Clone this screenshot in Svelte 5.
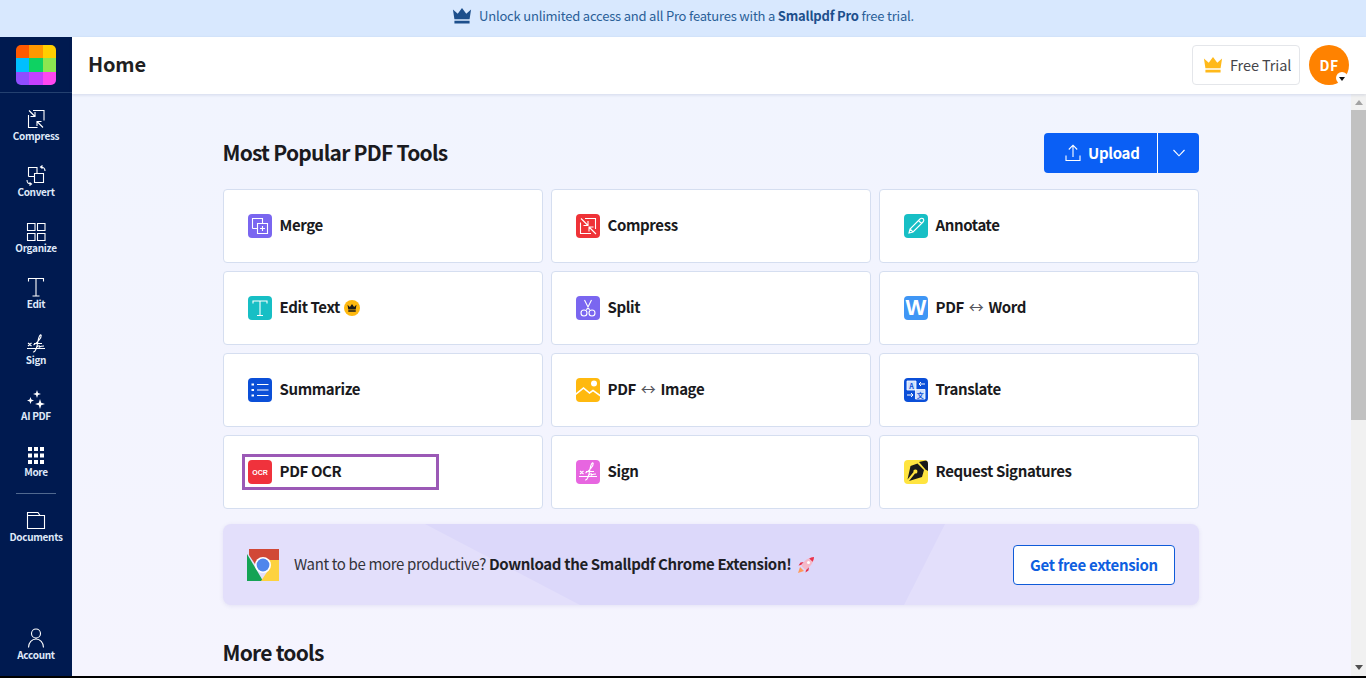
<script>
  const crown = "M1 1.5L5.5 5.5L9.5 0L13.5 5.5L18 1.5L16.6 10.5H2.4Z M2.4 12H16.6V14.6H2.4Z";
  const signPath = "M3 16.5H21 M4 11L7.5 14 M7.5 11L4 14 M9 20C11.5 20.5 13 15 14 9C14.8 4.5 16.5 1.5 17.2 3.5C17.5 6 13.5 10.5 9.5 13 M10 11.5H18 M13 15C15 13 16 13.5 15.5 15C17 14 18 14 20 14";

  const nav = [
    { label: "Compress", d: "M9 2.5H20V12.5 M4.5 7V19.5H13.5 M5 2.5L11 8.5 M11 4V8.5H6.5 M19 19.5L13 13.5 M13 18V13.5H17.5" },
    { label: "Convert", d: "M4.5 12.5V3.5H13V9 M4.5 12.5H10.5 M10.5 9.5H19.5V18.5H10.5Z M18.5 1.5L16.5 3L18.5 4.5 M16.5 3C19.5 3 21 4 21 7 M5.5 21.5L7.5 20L5.5 18.5 M7.5 20C4.5 20 3 19 3 16" },
    { label: "Organize", d: "M3.5 3.5H11V10.5H3.5Z M13.5 3.5H21V10.5H13.5Z M3.5 13.5H11V20.5H3.5Z M13.5 13.5H21V20.5H13.5Z" },
    { label: "Edit", d: "M4.5 5.5V2.5H19.5V5.5 M12 2.5V20 M8.5 20H15.5" },
    { label: "Sign", d: signPath },
    { label: "AI PDF", f: "M13 2L14 5L17 6L14 7L13 10L12 7L9 6L12 5Z M6.5 9L7.4 11.6L10 12.5L7.4 13.4L6.5 16L5.6 13.4L3 12.5L5.6 11.6Z M16 11L17.2 14.8L21 16L17.2 17.2L16 21L14.8 17.2L11 16L14.8 14.8Z" },
    { label: "More", f: "M4 3H8V7H4Z M10 3H14V7H10Z M16 3H20V7H16Z M4 9.5H8V13.5H4Z M10 9.5H14V13.5H10Z M16 9.5H20V13.5H16Z M4 16H8V20H4Z M10 16H14V20H10Z M16 16H20V20H16Z" }
  ];

  const tools = [
    { name: "Merge", bg: "#7a66f0", d: "M4.5 14.5V4.5H14.5V9 M4.5 14.5H9.5 M9.5 9.5H19.5V19.5H9.5Z M14.5 12V17 M12 14.5H17" },
    { name: "Compress", bg: "#ef3237", d: "M9 4.5H19.5V15 M4.5 8.5V19.5H15 M5 4.5L12 11.5 M12 7V11.5H7.5 M20 20L13 13 M13 17.5V13H17.5" },
    { name: "Annotate", bg: "#17bfc5", d: "M5 19L6 15L16 5C17 4 18.5 4 19.5 5C20 6 20 7 19 8L9 18Z M14.5 6.5L17.5 9.5 M6 15L9 18" },
    { name: "Edit Text", bg: "#17bfc5", pro: true, d: "M5 7.5V5H19V7.5 M12 5V19.5 M9 19.5H15" },
    { name: "Split", bg: "#7a66f0", d: "M8.5 4L13.5 14 M15.5 4L10.5 14 M11 17A3 3 0 1 1 5 17A3 3 0 1 1 11 17Z M19 17A3 3 0 1 1 13 17A3 3 0 1 1 19 17Z" },
    { name: "PDF", to: "Word", bg: "#3f96f5", letter: "W" },
    { name: "Summarize", bg: "#0b4fd8", d: "M9 6.5H20.5 M9 12H20.5 M9 17.5H20.5", f: "M3.5 5.5H6V7.5H3.5Z M3.5 11H6V13H3.5Z M3.5 16.5H6V18.5H3.5Z" },
    { name: "PDF", to: "Image", bg: "#ffb90f", f: "M0 15L7.5 9L13.5 14L17 11.5L24 16.5V18.5L17 13.5L13.5 16L7.5 11L0 17Z M21 5.5A3 3 0 1 1 15 5.5A3 3 0 1 1 21 5.5Z" },
    { name: "Translate", bg: "#0b4fd8", translate: true },
    { name: "PDF OCR", bg: "#f0323c", ocr: true },
    { name: "Sign", bg: "#e766e0", d: signPath },
    { name: "Request Signatures", bg: "#ffe43f", nib: true }
  ];
</script>

{#snippet glyph(item, size)}
  <svg class="glyph" width={size} height={size} viewBox="0 0 24 24" aria-hidden="true">
    {#if item.d}<path d={item.d} fill="none" stroke="#fff" stroke-width="1.1" />{/if}
    {#if item.f}<path d={item.f} fill="#fff" />{/if}
  </svg>
{/snippet}

{#snippet toolIcon(tool)}
  <span class="tool-icon" style="background: {tool.bg}">
    {#if tool.letter}
      <span class="letter">{tool.letter}</span>
    {:else if tool.ocr}
      <span class="ocr-mark">OCR</span>
    {:else if tool.nib}
      <svg width="24" height="24" viewBox="0 0 24 24" aria-hidden="true">
        <path d="M15 2L24 0V11L21.5 9.5L15 2Z" fill="#1a1a1a" />
        <path d="M13.5 3.5L20 10L18 17L5 21L11 13.5A2 2 0 1 0 9.5 12L3.5 19.5L6.5 6Z" fill="#1a1a1a" />
      </svg>
    {:else if tool.translate}
      <svg width="24" height="24" viewBox="0 0 24 24" aria-hidden="true">
        <path d="M3 3H12V12H3Z M11.5 11.5H21V21H11.5Z" fill="#cfe0fb" stroke="#fff" stroke-width=".8" />
        <text class="tr" x="7.5" y="10.5">A</text>
        <text class="tr" x="16.2" y="19.5">文</text>
        <path d="M21 6H15M17 4L15 6L17 8M3 17H9M7 15L9 17L7 19" fill="none" stroke="#fff" stroke-width="1" />
      </svg>
    {:else}
      {@render glyph(tool, 24)}
    {/if}
  </span>
{/snippet}

<div class="app">
  <div class="banner">
    <svg width="20" height="16" viewBox="1 0 17 15" aria-hidden="true"><path d={crown} fill="#1d4f8c" /></svg>
    <span>Unlock unlimited access and all Pro features with a <b>Smallpdf Pro</b> free trial.</span>
  </div>

  <div class="frame">
    <aside class="sidebar">
      <div class="logo-wrap">
        <div class="logo">
          <i style="background:#ff5a00"></i><i style="background:#ff9800"></i><i style="background:#ffcf00"></i>
          <i style="background:#00bfff"></i><i style="background:#0ed262"></i><i style="background:#8ce650"></i>
          <i style="background:#8f4dff"></i><i style="background:#c540ff"></i><i style="background:#ff47f0"></i>
        </div>
      </div>
      <nav class="nav">
        {#each nav as item}
          <div class="nav-item">{@render glyph(item, 24)}<span>{item.label}</span></div>
        {/each}
        <div class="nav-rule"></div>
        <div class="nav-item">
          {@render glyph({ d: "M3.5 19.5V3.5H14L16 6.5H20.5V19.5Z M3.5 6.5H16" }, 24)}<span>Documents</span>
        </div>
        <div class="nav-item account">
          {@render glyph({ d: "M16.5 6.5A4.5 4.5 0 1 1 7.5 6.5A4.5 4.5 0 1 1 16.5 6.5Z M4.5 20.5C4.5 15.5 8 12 12 12C16 12 19.5 15.5 19.5 20.5" }, 24)}<span>Account</span>
        </div>
      </nav>
    </aside>

    <div class="page">
      <header class="topbar">
        <h1>Home</h1>
        <button class="trial" type="button">
          <svg width="20" height="16" viewBox="1 0 17 15" aria-hidden="true"><path d={crown} fill="#ffb91a" /></svg>
          <span class="raised">Free Trial</span>
        </button>
        <div class="avatar">DF<span class="caret"></span></div>
      </header>

      <div class="body">
        <main class="content">
          <div class="heading-row">
            <h2>Most Popular PDF Tools</h2>
            <div class="upload">
              <button class="up-main" type="button">
                <svg width="16" height="18" viewBox="0 0 16 18" aria-hidden="true">
                  <path d="M8 13V1.5M3.8 5.5L8 1.2L12.2 5.5M1 11.5V16.5H15V11.5" fill="none" stroke="#fff" stroke-width="1.1" />
                </svg>
                <span class="raised">Upload</span>
              </button>
              <button class="up-more" type="button" aria-label="More upload options">
                <svg width="14" height="8" viewBox="0 0 14 8" aria-hidden="true"><path d="M1.5 1L7 6.8L12.5 1" fill="none" stroke="#fff" stroke-width="1.1" /></svg>
              </button>
            </div>
          </div>

          <div class="grid">
            {#each tools as tool}
              <div class="card">
                <div class="card-row" class:focused={tool.ocr}>
                  {@render toolIcon(tool)}
                  <span class="name">
                    {tool.name}{#if tool.to}<span class="arrow">↔</span>{tool.to}{/if}
                  </span>
                  {#if tool.pro}
                    <span class="pro">
                      <svg width="10" height="8" viewBox="0 0 19 15" aria-hidden="true"><path d={crown} fill="#1a1a1a" /></svg>
                    </span>
                  {/if}
                </div>
              </div>
            {/each}
          </div>

          <div class="promo">
            <svg class="chrome" width="32" height="32" viewBox="0 0 32 32" aria-hidden="true">
              <path d="M2 0H32V11H16L8 15L2 6Z" fill="#d14836" />
              <path d="M0 5L9 20L16 32H0Z" fill="#15a355" />
              <path d="M16 11H32V32H14L22 20Z" fill="#fdd23f" />
              <circle cx="16" cy="16" r="8" fill="#fff" />
              <circle cx="16" cy="16" r="6.4" fill="#4f86ec" />
            </svg>
            <p>Want to be more productive? <b>Download the Smallpdf Chrome Extension!</b></p>
            <svg class="rocket" width="18" height="18" viewBox="0 0 18 18" aria-hidden="true">
              <path d="M1 17L3 11L7 15Z" fill="#ff9a5a" />
              <path d="M4 9L1.5 9.5L3.5 6.5L7 6Z M9 14L8.5 16.5L11.5 14.5L12 11Z" fill="#e8344e" />
              <path d="M4.5 10C6.5 5 11 1.5 17 1C16.5 7 13 11.5 8 13.5Z" fill="#f5b8c8" />
              <path d="M17 1C16.8 3 16.3 4.5 15.6 5.8L12.2 2.4C13.5 1.7 15 1.2 17 1Z" fill="#e8344e" />
              <circle cx="11.5" cy="6.5" r="1.5" fill="#fff" />
            </svg>
            <button class="extension" type="button">Get free extension</button>
          </div>

          <h2 class="more-tools">More tools</h2>
        </main>

        <div class="scrollbar">
          <span class="arrow-up"></span>
          <span class="thumb"></span>
          <span class="arrow-down"></span>
        </div>
      </div>
    </div>
  </div>
</div>

<style>
  :global(body) {
    background: #000;
    overflow: hidden;
  }
  .app {
    height: 676px;
    display: flex;
    flex-direction: column;
    overflow: hidden;
    font-family: "Noto Sans CJK SC", "Noto Sans", sans-serif;
    color: #1a1a20;
  }
  button {
    font-family: inherit;
    cursor: pointer;
  }
  .raised { margin-bottom: 2px; }

  .banner {
    flex: 0 0 37px;
    box-sizing: border-box;
    padding-bottom: 5px;
    display: flex;
    align-items: center;
    justify-content: center;
    gap: 7px;
    background: #d8e8fe;
    color: #2a5f98;
    font-size: 13px;
    letter-spacing: -.2px;
    line-height: 20px;
  }
  .banner b { color: #1d4f8c; font-weight: 700; }

  .frame {
    flex: 1;
    min-height: 0;
    display: flex;
  }

  .sidebar {
    flex: 0 0 72px;
    display: flex;
    flex-direction: column;
    background: #001a50;
  }
  .logo-wrap {
    height: 56px;
    box-sizing: border-box;
    padding: 8px 16px;
    border-bottom: 1px solid #24406f;
  }
  .logo {
    width: 40px;
    height: 40px;
    display: grid;
    grid-template-columns: repeat(3, 1fr);
    grid-template-rows: repeat(3, 1fr);
    border-radius: 5px;
    overflow: hidden;
  }
  .nav {
    flex: 1;
    display: flex;
    flex-direction: column;
    padding: 7px 0 1px;
  }
  .nav-item {
    height: 56px;
    box-sizing: border-box;
    padding-top: 8px;
    display: flex;
    flex-direction: column;
    align-items: center;
    color: #dfe8f8;
    font-size: 10px;
    font-weight: 700;
    letter-spacing: -.3px;
    line-height: 14px;
  }
  .nav-item span { margin-top: -3px; }
  .nav-rule {
    height: 1px;
    margin: 1px 16px 7px;
    background: #51698f;
  }
  .account { margin-top: auto; }

  .page {
    flex: 1;
    min-width: 0;
    display: flex;
    flex-direction: column;
  }
  .topbar {
    flex: 0 0 57px;
    box-sizing: border-box;
    display: flex;
    align-items: center;
    padding: 0 17px 1px 16px;
    background: #fff;
    box-shadow: 0 1px 3px rgba(30, 50, 110, .14);
    position: relative;
  }
  h1 {
    margin: 0 auto 2px 0;
    font-size: 20px;
    letter-spacing: -.15px;
    line-height: 30px;
    font-weight: 700;
    color: #1f1f22;
  }
  .trial {
    width: 108px;
    height: 40px;
    display: flex;
    align-items: center;
    gap: 7px;
    padding: 0 0 0 10px;
    background: #fff;
    border: 1px solid #e4e6ea;
    border-radius: 4px;
    color: #45454a;
    font-size: 14.5px;
    letter-spacing: -.1px;
  }
  .avatar {
    width: 40px;
    height: 40px;
    margin-left: 9px;
    border-radius: 50%;
    background: #ff8200;
    color: #fff;
    display: flex;
    align-items: center;
    justify-content: center;
    font-size: 14px;
    font-weight: 700;
    letter-spacing: .5px;
    position: relative;
  }
  .caret {
    position: absolute;
    right: 1px;
    bottom: 1px;
    width: 12px;
    height: 12px;
    border-radius: 50%;
    background: #fff;
  }
  .caret::after {
    content: "";
    position: absolute;
    left: 2.5px;
    top: 5px;
    border: 3.5px solid transparent;
    border-top: 4px solid #111;
    border-bottom: 0;
  }

  .body {
    flex: 1;
    min-height: 0;
    display: flex;
    background: linear-gradient(180deg, #f1f4fe, #f5f4fe);
  }
  .content {
    flex: 1;
    min-width: 0;
    box-sizing: border-box;
    padding: 39px 152px 0 151px;
    overflow: hidden;
  }
  .heading-row {
    display: flex;
    align-items: center;
    justify-content: space-between;
    height: 40px;
    margin-bottom: 16px;
  }
  h2 {
    margin: 0 0 3px -.5px;
    font-size: 21px;
    letter-spacing: -.76px;
    line-height: 32px;
    font-weight: 700;
    color: #1a1a20;
  }
  .upload { display: flex; height: 40px; }
  .upload button {
    border: 0;
    background: #0a5ff5;
    color: #fff;
    display: flex;
    align-items: center;
  }
  .up-main {
    width: 114px;
    gap: 7px;
    padding: 0 0 0 21px;
    font-size: 15px;
    letter-spacing: -.3px;
    font-weight: 700;
    border-radius: 4px 0 0 4px;
    border-right: 1px solid #fff !important;
  }
  .up-more {
    width: 41px;
    padding: 0;
    justify-content: center;
    border-radius: 0 4px 4px 0;
  }

  .grid {
    display: grid;
    grid-template-columns: repeat(3, 320px);
    grid-auto-rows: 74px;
    gap: 8px;
  }
  .card {
    box-sizing: border-box;
    display: flex;
    align-items: center;
    padding-left: 24px;
    background: #fff;
    border: 1px solid #d5def0;
    border-radius: 4px;
  }
  .card-row {
    display: flex;
    align-items: center;
    gap: 7.5px;
  }
  .card-row.focused {
    width: 191px;
    box-sizing: border-box;
    margin-left: -3px;
    padding: 2px 3px;
    outline: 3px solid #9b59b6;
  }
  .tool-icon {
    width: 24px;
    height: 24px;
    flex: none;
    border-radius: 4px;
    overflow: hidden;
    display: flex;
    align-items: center;
    justify-content: center;
  }
  .glyph { display: block; flex: none; }
  .letter {
    color: #fff;
    font-family: "Liberation Sans", sans-serif;
    font-size: 22px;
    font-weight: 700;
    line-height: 24px;
  }
  .ocr-mark {
    color: #fff;
    font-family: "Liberation Sans", sans-serif;
    font-size: 7px;
    font-weight: 700;
  }
  .tr {
    font-family: "Noto Sans CJK SC", sans-serif;
    font-size: 7px;
    font-weight: 700;
    text-anchor: middle;
    fill: #0b4fd8;
  }
  .name {
    font-size: 15px;
    letter-spacing: -.38px;
    line-height: 24px;
    font-weight: 700;
    padding-bottom: 2px;
  }
  .arrow {
    margin: 0 5px;
    font-weight: 400;
    color: #55555c;
  }
  .pro {
    width: 16px;
    height: 16px;
    margin-left: -3.5px;
    border-radius: 50%;
    background: #ffb90f;
    display: flex;
    align-items: center;
    justify-content: center;
  }

  .promo {
    height: 81px;
    margin-top: 15px;
    box-sizing: border-box;
    padding: 0 24px;
    display: flex;
    align-items: center;
    background: #e3dffb;
    border-radius: 8px;
    box-shadow: 0 1px 4px rgba(80, 70, 160, .1);
    position: relative;
    overflow: hidden;
  }
  .promo::before {
    content: "";
    position: absolute;
    inset: 0;
    background: #dcd8fa;
    clip-path: polygon(202px 0, 722px 0, 681px 100%, 357px 100%);
  }
  .promo > * { position: relative; }
  .chrome { flex: none; }
  .promo p {
    margin: 0 6px 1px 15px;
    font-size: 15px;
    letter-spacing: -.35px;
    line-height: 24px;
    color: #33333a;
  }
  .promo b { color: #1f1f26; font-weight: 700; }
  .rocket { flex: none; }
  .extension {
    margin-left: auto;
    width: 162px;
    height: 40px;
    padding: 0 0 1px;
    background: #fff;
    border: 1px solid #0f5bd8;
    border-radius: 4px;
    color: #0f5fe0;
    font-size: 15px;
    letter-spacing: -.32px;
    font-weight: 700;
  }
  .more-tools { margin-top: 31px; }

  .scrollbar {
    flex: 0 0 15px;
    display: flex;
    flex-direction: column;
    align-items: center;
    background: #f1f1f1;
  }
  .thumb {
    width: 100%;
    height: 310px;
    background: #c1c1c1;
  }
  .arrow-up {
    margin: 6px 0 5px;
    border: 4px solid transparent;
    border-bottom: 5px solid #a3a3a3;
    border-top: 0;
  }
  .arrow-down {
    margin-top: auto;
    margin-bottom: 6px;
    border: 4px solid transparent;
    border-top: 5px solid #505050;
    border-bottom: 0;
  }
</style>
